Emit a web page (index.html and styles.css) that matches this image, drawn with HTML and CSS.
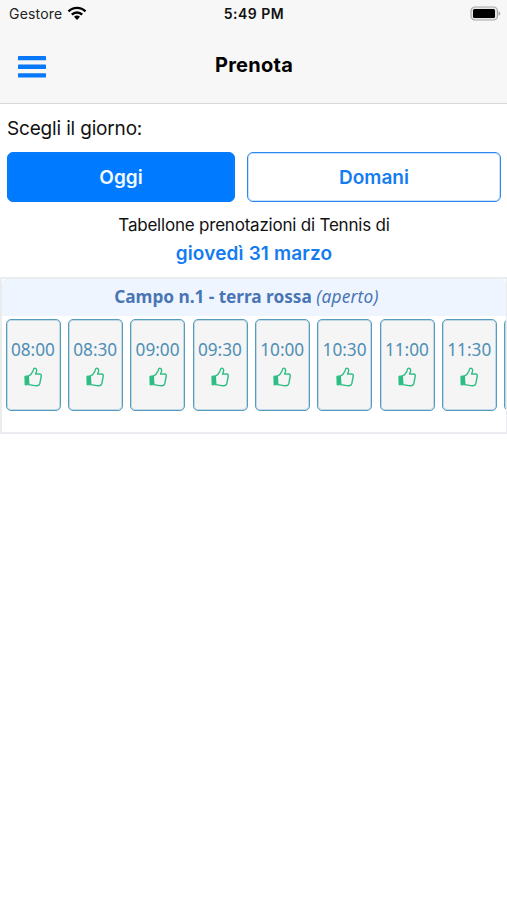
FILE: index.html
```html
<!DOCTYPE html>
<html lang="it">
<head>
<meta charset="utf-8">
<meta name="viewport" content="width=device-width, initial-scale=1">
<title>Prenota</title>
<link rel="stylesheet" href="styles.css">
</head>
<body>
<svg class="defs" aria-hidden="true">
  <symbol id="thumb" viewBox="0 0 18 20">
    <path class="cuff" d="M.9 9.200 4.100 8.900 4.700 17.600 1.100 18Z"/>
    <path class="hand" d="M4.300 9.200C6.400 8.200 8 6.500 8.900 4.300 9.500 2.600 9.500 1.100 10.700 1.100c1.800.1 2.200 1.900 1.700 3.600l-.8 2.400 4-.2c1.400.1 1.800 1.100 1.600 2.400l-1.400 7.400c-.3 1.400-1.200 2-2.700 2-2.700.1-5.200-.7-8.300-1.100Z"/>
  </symbol>
</svg>
<header class="top">
  <div class="status">
    <div class="carrier"><span>Gestore</span>
      <svg class="wifi" viewBox="0 0 20 15"><path class="arc" d="M1.500 5.300C6.200.7 13.800.7 18.500 5.300M4.800 8.700c2.900-2.900 7.500-2.900 10.400 0"/><path d="M7 10.700c1.800-1.500 4.200-1.500 6 0L10 13.900Z"/></svg>
    </div>
    <div class="clock">5:49 PM</div>
    <svg class="battery" viewBox="0 0 31 16"><rect class="case" x="1" y="1" width="26.500" height="13" rx="4"/><rect x="3" y="3" width="22" height="9" rx="1.500"/><path class="cap" d="M28.500 5.500c2.500.8 2.500 3.200 0 4Z"/></svg>
  </div>
  <div class="nav">
    <svg class="menu" viewBox="0 0 28 22"><rect width="28" height="4.300" rx=".6"/><rect y="8.600" width="28" height="4.300" rx=".6"/><rect y="17.200" width="28" height="4.300" rx=".6"/></svg>
    <h1>Prenota</h1>
    <span></span>
  </div>
</header>
<main>
  <p class="choose"><span>Scegli il giorno:</span></p>
  <div class="days">
    <button class="day active">Oggi</button>
    <button class="day">Domani</button>
  </div>
  <p class="caption">Tabellone prenotazioni di Tennis di</p>
  <p class="date">giovedì 31 marzo</p>
  <section class="court">
    <h2><b>Campo n.1 - terra rossa</b> <em>(aperto)</em></h2>
    <div class="slots">
      <div class="slot"><span>08:00</span><svg><use href="#thumb"/></svg></div>
      <div class="slot"><span>08:30</span><svg><use href="#thumb"/></svg></div>
      <div class="slot"><span>09:00</span><svg><use href="#thumb"/></svg></div>
      <div class="slot"><span>09:30</span><svg><use href="#thumb"/></svg></div>
      <div class="slot"><span>10:00</span><svg><use href="#thumb"/></svg></div>
      <div class="slot"><span>10:30</span><svg><use href="#thumb"/></svg></div>
      <div class="slot"><span>11:00</span><svg><use href="#thumb"/></svg></div>
      <div class="slot"><span>11:30</span><svg><use href="#thumb"/></svg></div>
      <div class="slot"></div>
    </div>
  </section>
</main>
</body>
</html>
```
FILE: styles.css
```css
* { box-sizing: border-box; }
body { margin: 0; background: #fff; color: #111; font-family: Inter, "Liberation Sans", sans-serif; overflow: hidden; }
h1, h2, p { margin: 0; }
.defs { display: none; }
.top { height: 104px; background: #f7f7f7; border-bottom: 1px solid #d9d9d9; }
.status { height: 27px; display: grid; grid-template-columns: 1fr auto 1fr; align-items: center; padding: 0 6px 0 7px; }
.carrier { display: flex; align-items: center; gap: 4.500px; padding-left: 2px; font-size: 14px; letter-spacing: 0.2px; color: #222; }
.wifi { width: 20px; height: 15px; margin-top: -1px; }
.wifi .arc { fill: none; stroke: #000; stroke-width: 2.4; }
.clock { font-size: 14px; font-weight: 600; letter-spacing: 0.5px; }
.battery { width: 31px; height: 16px; justify-self: end; }
.battery .case { fill: #e6e6e6; stroke: #aaa; stroke-width: 1.2; }
.battery .cap { fill: #aaa; }
.nav { height: 76px; display: grid; grid-template-columns: 1fr auto 1fr; align-items: center; padding: 0 17px; }
.menu { width: 28px; height: 22px; margin: 4px 0 0 .6px; fill: #0878fa; }
h1 { font-size: 20px; line-height: 24px; font-weight: 700; letter-spacing: 0.25px; color: #000; padding-left: 1px; }
.choose { padding: 12px 7px 0; font-size: 19px; line-height: 25px; letter-spacing: -0.17px; height: 48px; }
.days { display: grid; grid-template-columns: 228px 254px; gap: 12px; padding-left: 7px; }
.day { height: 50px; padding: 1px 0 0; border: 1px solid #2b87ee; box-shadow: inset 0 0 0 1px #2b87ee40; border-radius: 6px; background: #fff; color: #147cf0; font: 600 19px/24px Inter, sans-serif; }
.day.active { background: #007aff; border-color: #007aff; color: #f2f9ff; }
.caption { margin-top: 12px; text-align: center; font-size: 17px; line-height: 22px; letter-spacing: -0.21px; padding-left: 1px; }
.date { margin-top: 6px; text-align: center; font-size: 19px; line-height: 24px; letter-spacing: 0.15px; font-weight: 600; color: #147cf0; padding-left: 1px; }
.court { margin-top: 11px; height: 157px; border: solid #ebecef; border-width: 2px 1px 2px 2px; overflow: hidden; font-family: "Noto Sans", sans-serif; }
h2 { height: 37px; padding-right: 15px; border-radius: 5px 5px 0 0; background: #eff5ff; color: #4a75b5; text-align: center; font-size: 17px; line-height: 35px; font-weight: 400; letter-spacing: 0; }
h2 b { letter-spacing: -0.05px; }
h2 em { letter-spacing: 0.22px; }
h2 b, h2 em { font-size: 17.300px; }
.slots { display: flex; gap: 7.350px; padding: 3px 0 0 3.600px; }
.slot { flex: 0 0 55px; height: 92px; padding-top: 18px; border: 1px solid #559cbf; box-shadow: inset 0 0 0 1px #559cbf50; border-radius: 5px; background: #f5f5f5; color: #4f8fb5; display: flex; flex-direction: column; align-items: center; font-size: 17.200px; line-height: 24px; }
.slot span { margin-left: -.5px; }
.slot svg { width: 18px; height: 20px; margin: 5px .5px 0 0; }
.cuff { fill: #2bbd82; stroke: #2bbd82; stroke-width: 1; }
.hand { fill: none; stroke: #2bbd82; stroke-width: 1.400; stroke-linejoin: round; }
```
